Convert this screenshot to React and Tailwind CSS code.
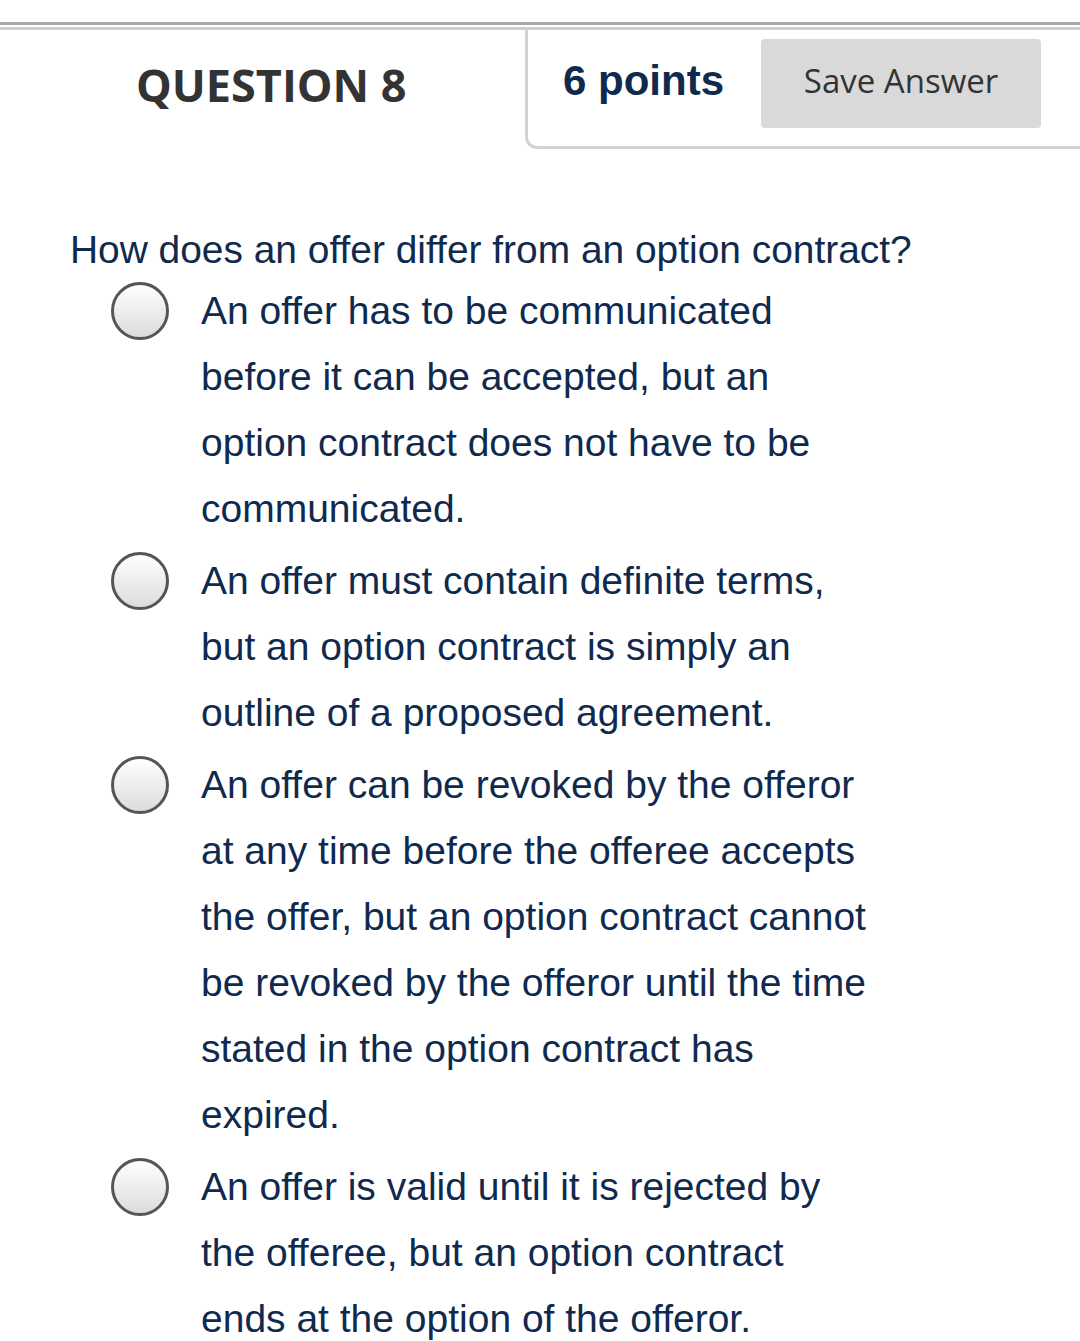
import React from "react";

const options = [
  ["An offer has to be communicated", "before it can be accepted, but an", "option contract does not have to be", "communicated."],
  ["An offer must contain definite terms,", "but an option contract is simply an", "outline of a proposed agreement."],
  ["An offer can be revoked by the offeror", "at any time before the offeree accepts", "the offer, but an option contract cannot", "be revoked by the offeror until the time", "stated in the option contract has", "expired."],
  ["An offer is valid until it is rejected by", "the offeree, but an option contract", "ends at the option of the offeror."],
];

function Radio() {
  return (
    <div className="w-[58px] h-[58px] rounded-full border-[3px] border-[#555555] bg-gradient-to-b from-white to-[#dcdcdc] shrink-0" />
  );
}

export default function App() {
  return (
    <div className="w-[1080px] h-[1341px] bg-white overflow-hidden pt-[22px]">
      <div className="border-t-[3px] border-[#a8a8a8]" />
      <div className="mt-[2px] border-t-[3px] border-[#cdcdcd]" />
      <div className="flex">
        <div className="w-[525px] flex items-start pl-[136px]">
          <span className="mt-[25px] text-[45px] leading-[60px] font-bold text-[#333333]" style={{ fontFamily: '"Open Sans", sans-serif' }}>
            QUESTION 8
          </span>
        </div>
        <div className="flex-1 h-[119px] border-l-[3px] border-b-[3px] border-[#d2d2d2] rounded-bl-[12px] flex items-start">
          <span className="mt-[26px] ml-[35px] text-[42px] font-bold text-[#0f2a4e] leading-[50px]" style={{ fontFamily: '"Liberation Sans", Arial, sans-serif' }}>
            6 points
          </span>
          <div className="ml-[37px] mt-[9px] w-[280px] h-[89px] bg-[#d9d9d9] rounded-[4px] flex items-center justify-center pb-[6px] text-[33px] text-[#333333]" style={{ fontFamily: '"Open Sans", sans-serif' }}>
            Save Answer
          </div>
        </div>
      </div>
      <div className="pl-[70px] pt-[76px] text-[#0f2a4e]" style={{ fontFamily: '"Liberation Sans", Arial, sans-serif' }}>
        <div className="text-[38.9px] leading-[50px]">How does an offer differ from an option contract?</div>
        <div className="mt-[3px] flex flex-col gap-[6px]">
          {options.map((lines, i) => (
            <div key={i} className="flex pl-[41px]">
              <div className="pt-[4px]"><Radio /></div>
              <div className="ml-[32px] text-[39px] leading-[66px]">
                {lines.map((l, j) => (
                  <div key={j}>{l}</div>
                ))}
              </div>
            </div>
          ))}
        </div>
      </div>
    </div>
  );
}
